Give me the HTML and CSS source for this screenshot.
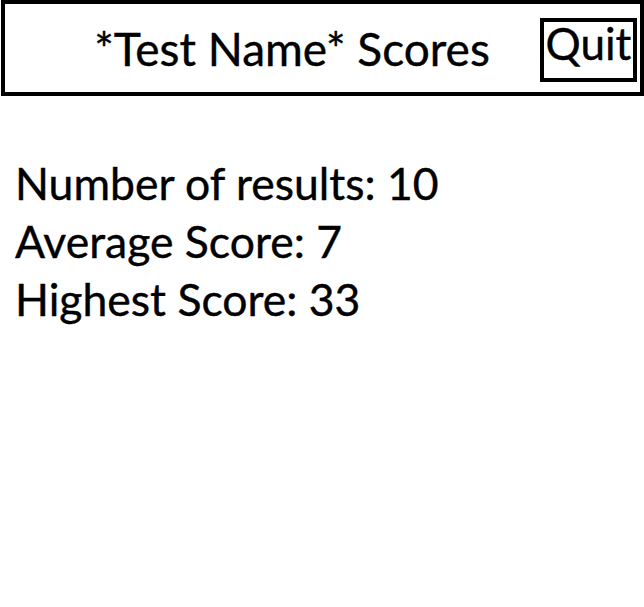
FILE: index.html
```html
<!DOCTYPE html>
<html lang="en">
<head>
<meta charset="utf-8">
<title>Test Scores</title>
<link rel="stylesheet" href="styles.css">
</head>
<body>
  <header class="header">
    <h1 class="title">*Test Name* Scores</h1>
    <button class="quit" type="button">Quit</button>
  </header>
  <section class="stats">
    <p class="stat">Number of results: 10</p>
    <p class="stat">Average Score: 7</p>
    <p class="stat">Highest Score: 33</p>
  </section>
</body>
</html>
```

FILE: styles.css
```css
html, body {
  margin: 0;
  padding: 0;
  background: #fff;
}

body {
  font-family: Lato, "Open Sans", sans-serif;
  color: #000;
  -webkit-text-stroke: 0.4px #000;
}

.header {
  display: flex;
  align-items: flex-start;
  box-sizing: border-box;
  height: 96px;
  margin-left: 1px;
  width: 643px;
  border: 4px solid #000;
}

.title {
  flex: 1;
  margin: 0;
  padding: 1px 0 0 39px;
  text-align: center;
  font-weight: normal;
  font-size: 46px;
  line-height: 88px;
  white-space: nowrap;
}

.quit {
  box-sizing: border-box;
  width: 97px;
  height: 64px;
  margin: 14px 3px 0 0;
  padding: 0 0 14px;
  border: 4px solid #000;
  background: #fff;
  font-family: inherit;
  font-size: 44px;
  line-height: 42px;
  color: #000;
  -webkit-text-stroke: inherit;
}

.stats {
  padding: 58px 0 0 15px;
}

.stat {
  margin: 0;
  font-size: 44.5px;
  line-height: 58px;
}
```
